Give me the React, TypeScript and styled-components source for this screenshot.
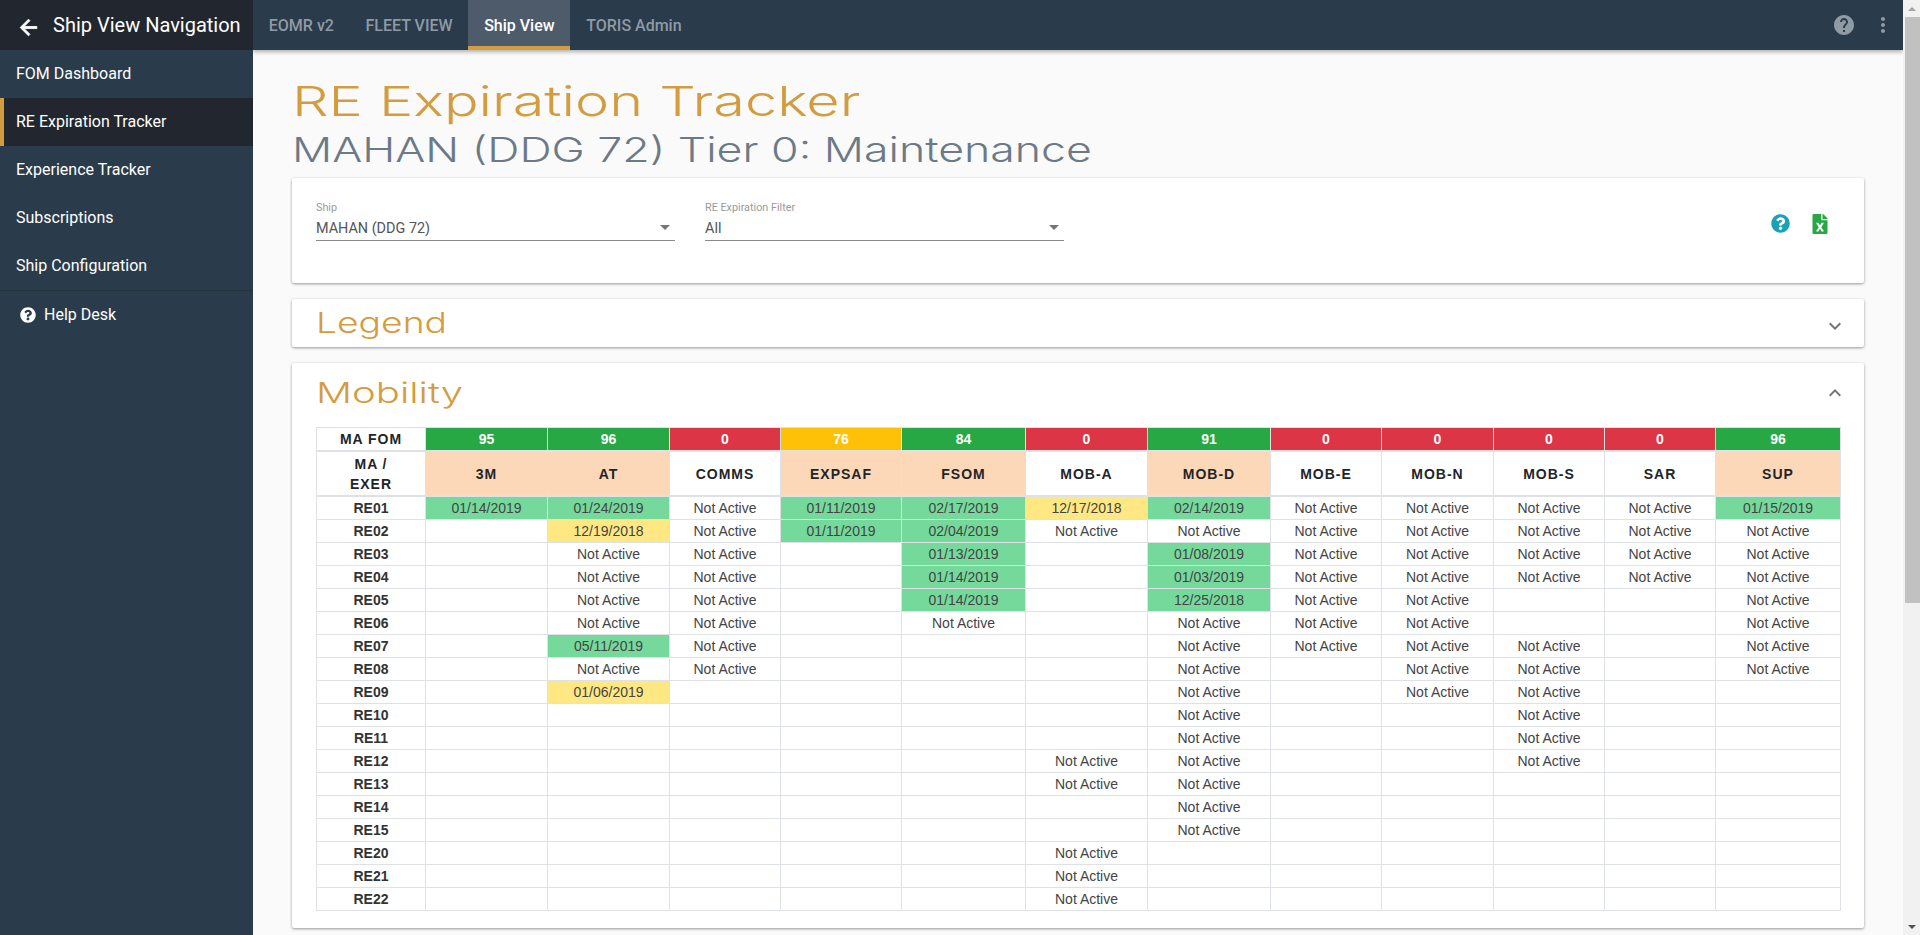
import React from 'react';
import styled, { createGlobalStyle } from 'styled-components';
import { FaFileExcel, FaQuestionCircle } from 'react-icons/fa';
import { MdArrowBack, MdExpandLess, MdExpandMore, MdHelp, MdMoreVert } from 'react-icons/md';

type Tone = 'good' | 'warn';
type Cell = { text: string; tone?: Tone };

const NA: Cell = { text: 'Not Active' };
const g = (text: string): Cell => ({ text, tone: 'good' });
const y = (text: string): Cell => ({ text, tone: 'warn' });

const NAV_ITEMS = ['FOM Dashboard', 'RE Expiration Tracker', 'Experience Tracker', 'Subscriptions', 'Ship Configuration'];
const TABS = ['EOMR v2', 'FLEET VIEW', 'Ship View', 'TORIS Admin'];

const COLUMNS = [
    { name: '3M', fom: 95, width: 122, tracked: true },
    { name: 'AT', fom: 96, width: 122, tracked: true },
    { name: 'COMMS', fom: 0, width: 111, tracked: false },
    { name: 'EXPSAF', fom: 76, width: 121, tracked: true },
    { name: 'FSOM', fom: 84, width: 124, tracked: true },
    { name: 'MOB-A', fom: 0, width: 122, tracked: false },
    { name: 'MOB-D', fom: 91, width: 123, tracked: true },
    { name: 'MOB-E', fom: 0, width: 111, tracked: false },
    { name: 'MOB-N', fom: 0, width: 112, tracked: false },
    { name: 'MOB-S', fom: 0, width: 111, tracked: false },
    { name: 'SAR', fom: 0, width: 111, tracked: false },
    { name: 'SUP', fom: 96, width: 125, tracked: true },
];

const ROWS: { name: string; cells: Record<string, Cell> }[] = [
    { name: 'RE01', cells: { '3M': g('01/14/2019'), AT: g('01/24/2019'), COMMS: NA, EXPSAF: g('01/11/2019'), FSOM: g('02/17/2019'), 'MOB-A': y('12/17/2018'), 'MOB-D': g('02/14/2019'), 'MOB-E': NA, 'MOB-N': NA, 'MOB-S': NA, SAR: NA, SUP: g('01/15/2019') } },
    { name: 'RE02', cells: { AT: y('12/19/2018'), COMMS: NA, EXPSAF: g('01/11/2019'), FSOM: g('02/04/2019'), 'MOB-A': NA, 'MOB-D': NA, 'MOB-E': NA, 'MOB-N': NA, 'MOB-S': NA, SAR: NA, SUP: NA } },
    { name: 'RE03', cells: { AT: NA, COMMS: NA, FSOM: g('01/13/2019'), 'MOB-D': g('01/08/2019'), 'MOB-E': NA, 'MOB-N': NA, 'MOB-S': NA, SAR: NA, SUP: NA } },
    { name: 'RE04', cells: { AT: NA, COMMS: NA, FSOM: g('01/14/2019'), 'MOB-D': g('01/03/2019'), 'MOB-E': NA, 'MOB-N': NA, 'MOB-S': NA, SAR: NA, SUP: NA } },
    { name: 'RE05', cells: { AT: NA, COMMS: NA, FSOM: g('01/14/2019'), 'MOB-D': g('12/25/2018'), 'MOB-E': NA, 'MOB-N': NA, SUP: NA } },
    { name: 'RE06', cells: { AT: NA, COMMS: NA, FSOM: NA, 'MOB-D': NA, 'MOB-E': NA, 'MOB-N': NA, SUP: NA } },
    { name: 'RE07', cells: { AT: g('05/11/2019'), COMMS: NA, 'MOB-D': NA, 'MOB-E': NA, 'MOB-N': NA, 'MOB-S': NA, SUP: NA } },
    { name: 'RE08', cells: { AT: NA, COMMS: NA, 'MOB-D': NA, 'MOB-N': NA, 'MOB-S': NA, SUP: NA } },
    { name: 'RE09', cells: { AT: y('01/06/2019'), 'MOB-D': NA, 'MOB-N': NA, 'MOB-S': NA } },
    { name: 'RE10', cells: { 'MOB-D': NA, 'MOB-S': NA } },
    { name: 'RE11', cells: { 'MOB-D': NA, 'MOB-S': NA } },
    { name: 'RE12', cells: { 'MOB-A': NA, 'MOB-D': NA, 'MOB-S': NA } },
    { name: 'RE13', cells: { 'MOB-A': NA, 'MOB-D': NA } },
    { name: 'RE14', cells: { 'MOB-D': NA } },
    { name: 'RE15', cells: { 'MOB-D': NA } },
    { name: 'RE20', cells: { 'MOB-A': NA } },
    { name: 'RE21', cells: { 'MOB-A': NA } },
    { name: 'RE22', cells: { 'MOB-A': NA } },
];

const fomColor = (fom: number) => (fom >= 80 ? '#28a745' : fom >= 60 ? '#ffc107' : '#dc3545');

const App: React.FC = () => (
    <>
        <GlobalStyle />
        <Shell>
            <Sidebar>
                <Brand>
                    <BackIcon>
                        <MdArrowBack size={25} />
                    </BackIcon>
                    <BrandTitle>Ship View Navigation</BrandTitle>
                </Brand>
                {NAV_ITEMS.map((item) => (
                    <NavItem key={item} active={item === 'RE Expiration Tracker'}>
                        {item}
                    </NavItem>
                ))}
                <HelpDesk>
                    <FaQuestionCircle size={16} />
                    Help Desk
                </HelpDesk>
            </Sidebar>
            <Main>
                <TopBar>
                    {TABS.map((tab) => (
                        <Tab key={tab} active={tab === 'Ship View'}>
                            {tab}
                        </Tab>
                    ))}
                    <TopIcons>
                        <MdHelp size={24} />
                        <MdMoreVert size={24} />
                    </TopIcons>
                </TopBar>
                <Content>
                    <PageTitle>RE Expiration Tracker</PageTitle>
                    <PageSubtitle>MAHAN (DDG 72) Tier 0: Maintenance</PageSubtitle>
                    <FilterCard>
                        <SelectField>
                            <SelectLabel>Ship</SelectLabel>
                            <SelectValue>MAHAN (DDG 72)</SelectValue>
                        </SelectField>
                        <SelectField>
                            <SelectLabel>RE Expiration Filter</SelectLabel>
                            <SelectValue>All</SelectValue>
                        </SelectField>
                        <FilterActions>
                            <FaQuestionCircle size={19} color="#17a2b8" />
                            <FaFileExcel size={20} color="#28a745" />
                        </FilterActions>
                    </FilterCard>
                    <PanelHeader>
                        <PanelTitle stretch={1.33}>Legend</PanelTitle>
                        <LowerChevron>
                            <MdExpandMore size={24} color="#757575" />
                        </LowerChevron>
                    </PanelHeader>
                    <Panel>
                        <PanelHead>
                            <PanelTitle stretch={1.43}>Mobility</PanelTitle>
                            <MdExpandLess size={24} color="#757575" />
                        </PanelHead>
                        <FomTable>
                            <colgroup>
                                <Col width={109} />
                                {COLUMNS.map((col) => (
                                    <Col key={col.name} width={col.width} />
                                ))}
                            </colgroup>
                            <thead>
                                <tr>
                                    <HeadCell>MA FOM</HeadCell>
                                    {COLUMNS.map((col) => (
                                        <FomCell key={col.name} color={fomColor(col.fom)}>
                                            {col.fom}
                                        </FomCell>
                                    ))}
                                </tr>
                                <tr>
                                    <ExerciseCell>
                                        MA /<br />
                                        EXER
                                    </ExerciseCell>
                                    {COLUMNS.map((col) => (
                                        <ExerciseCell key={col.name} tracked={col.tracked}>
                                            {col.name}
                                        </ExerciseCell>
                                    ))}
                                </tr>
                            </thead>
                            <tbody>
                                {ROWS.map((row) => (
                                    <tr key={row.name}>
                                        <RowName>{row.name}</RowName>
                                        {COLUMNS.map((col) => (
                                            <DataCell key={col.name} tone={row.cells[col.name]?.tone}>
                                                {row.cells[col.name]?.text}
                                            </DataCell>
                                        ))}
                                    </tr>
                                ))}
                            </tbody>
                        </FomTable>
                    </Panel>
                </Content>
            </Main>
            <ScrollRail>
                <ScrollArrow />
                <ScrollThumb />
                <ScrollArrow down />
            </ScrollRail>
        </Shell>
    </>
);

const GlobalStyle = createGlobalStyle`
    body {
        margin: 0;
        background: #fafafa;
        font-family: Roboto, 'Liberation Sans', sans-serif;
        overflow: hidden;
    }
`;

const Shell = styled.div`
    display: flex;
    height: 100vh;
    overflow: hidden;
`;

const Sidebar = styled.nav`
    flex: 0 0 253px;
    background: #2a3b4b;
    color: #fff;
`;

const Brand = styled.div`
    display: flex;
    align-items: center;
    height: 50px;
    padding-left: 16px;
    background: #22272f;
`;

const BackIcon = styled.span`
    display: flex;
    width: 37px;
    margin-top: 5px;
    & svg path:not([fill='none']) {
        stroke: currentColor;
        stroke-width: 0.8;
    }
`;

const BrandTitle = styled.span`
    font-size: 20px;
    white-space: nowrap;
`;

const NavItem = styled.div<{ active?: boolean }>`
    display: flex;
    align-items: center;
    height: 48px;
    padding: 0 0 1px ${(props) => (props.active ? '12px' : '16px')};
    box-sizing: border-box;
    border-left: ${(props) => (props.active ? '4px solid #d39c3f' : 'none')};
    background: ${(props) => (props.active ? '#22272f' : 'transparent')};
    font-size: 16px;
`;

const HelpDesk = styled.div`
    display: flex;
    align-items: center;
    gap: 8px;
    height: 47px;
    padding-left: 20px;
    border-top: 1px solid #25333f;
    font-size: 16px;
`;

const Main = styled.div`
    flex: 1;
    min-width: 0;
    overflow: hidden;
`;

const TopBar = styled.header`
    position: relative;
    z-index: 2;
    display: flex;
    height: 50px;
    background: #2a3b4b;
    box-shadow: 0 2px 4px rgba(0, 0, 0, 0.3);
`;

const Tab = styled.div<{ active?: boolean }>`
    display: flex;
    align-items: center;
    padding: 0 15.8px;
    font-size: 16px;
    font-weight: 500;
    color: ${(props) => (props.active ? '#fff' : '#8f9aa5')};
    background: ${(props) => (props.active ? '#4d5b6a' : 'transparent')};
    box-shadow: ${(props) => (props.active ? 'inset 0 -4px 0 #d39c3f' : 'none')};
`;

const TopIcons = styled.div`
    display: flex;
    align-items: center;
    gap: 15px;
    margin-left: auto;
    padding-right: 8px;
    color: #8f9aa5;
`;

const Content = styled.main`
    padding: 27px 39px 0;
`;

const PageTitle = styled.h1`
    margin: 0 0 6px;
    font-family: Inter, sans-serif;
    font-weight: 300;
    font-size: 41px;
    line-height: 48px;
    color: #d39c3f;
    white-space: nowrap;
    transform: scaleX(1.405);
    transform-origin: left;
`;

const PageSubtitle = styled.h2`
    margin: 0 0 9px;
    font-family: Inter, sans-serif;
    font-weight: 300;
    font-size: 34px;
    line-height: 38px;
    color: #6c7986;
    white-space: nowrap;
    transform: scaleX(1.313);
    transform-origin: left;
`;

const FilterCard = styled.section`
    display: flex;
    gap: 30px;
    height: 105px;
    padding: 24px 24px 0;
    box-sizing: border-box;
    background: #fff;
    border-radius: 2px;
    box-shadow: 0 1px 3px rgba(0, 0, 0, 0.4);
`;

const SelectField = styled.div`
    position: relative;
    width: 359px;
    height: 38px;
    border-bottom: 1px solid #8a8a8a;
    &::after {
        content: '';
        position: absolute;
        right: 5px;
        bottom: 10px;
        border: 5px solid transparent;
        border-top-color: #757575;
        border-bottom-width: 0;
    }
`;

const SelectLabel = styled.div`
    font-size: 10.8px;
    line-height: 12px;
    color: #9a9a9a;
`;

const SelectValue = styled.div`
    margin-top: 5px;
    font-size: 14.4px;
    line-height: 20px;
    color: #555;
`;

const FilterActions = styled.div`
    display: flex;
    align-items: flex-start;
    gap: 20px;
    margin-left: auto;
    padding: 12px 10px 0 0;
`;

const PanelHeader = styled.section`
    display: flex;
    align-items: center;
    justify-content: space-between;
    height: 48px;
    margin-top: 16px;
    padding: 0 17px 0 24px;
    background: #fff;
    border-radius: 2px;
    box-shadow: 0 1px 3px rgba(0, 0, 0, 0.4);
`;

const LowerChevron = styled.span`
    display: flex;
    margin-top: 6px;
`;

const Panel = styled.section`
    height: 565px;
    margin-top: 16px;
    padding: 0 24px;
    box-sizing: border-box;
    background: #fff;
    border-radius: 2px;
    box-shadow: 0 1px 3px rgba(0, 0, 0, 0.4);
`;

const PanelHead = styled.div`
    display: flex;
    align-items: center;
    justify-content: space-between;
    height: 64px;
    padding-bottom: 4px;
    box-sizing: border-box;
    margin-right: -7px;
`;

const PanelTitle = styled.h3<{ stretch: number }>`
    margin: 0;
    font-family: Inter, sans-serif;
    font-weight: 300;
    font-size: 28px;
    color: #d39c3f;
    transform: scaleX(${(props) => props.stretch});
    transform-origin: left;
`;

const FomTable = styled.table`
    table-layout: fixed;
    width: 1524px;
    border-collapse: collapse;
    font-family: 'Liberation Sans', sans-serif;
    font-size: 14px;
    line-height: 22px;
    text-align: center;
    color: #444;
    & td,
    & th {
        padding: 0;
        border: 1px solid #dee2e6;
    }
    & thead td,
    & thead th {
        border-bottom-width: 2px;
    }
`;

const Col = styled.col<{ width: number }>`
    width: ${(props) => props.width}px;
`;

const HeadCell = styled.th`
    color: #212529;
    letter-spacing: 1px;
`;

const FomCell = styled.td<{ color: string }>`
    background: ${(props) => props.color};
    color: #fff;
    font-weight: 700;
`;

const ExerciseCell = styled.th<{ tracked?: boolean }>`
    height: 43px;
    background: ${(props) => (props.tracked ? '#fdd8b8' : '#fff')};
    color: #212529;
    letter-spacing: 1px;
    line-height: 20px;
`;

const RowName = styled.td`
    font-weight: 700;
    color: #333;
`;

const DataCell = styled.td<{ tone?: Tone }>`
    background: ${(props) => (props.tone === 'good' ? '#75d99c' : props.tone === 'warn' ? '#ffe883' : '#fff')};
`;

const ScrollRail = styled.div`
    flex: 0 0 17px;
    display: flex;
    flex-direction: column;
    background: #f1f1f1;
`;

const ScrollArrow = styled.div<{ down?: boolean }>`
    flex: 0 0 17px;
    margin-top: ${(props) => (props.down ? 'auto' : '0')};
    display: flex;
    align-items: center;
    justify-content: center;
    &::before {
        content: '';
        border-left: 4px solid transparent;
        border-right: 4px solid transparent;
        border-${(props) => (props.down ? 'top' : 'bottom')}: 4px solid ${(props) => (props.down ? '#505050' : '#a3a3a3')};
    }
`;

const ScrollThumb = styled.div`
    flex: 0 0 586px;
    margin-left: 2px;
    background: #c1c1c1;
`;

export default App;
